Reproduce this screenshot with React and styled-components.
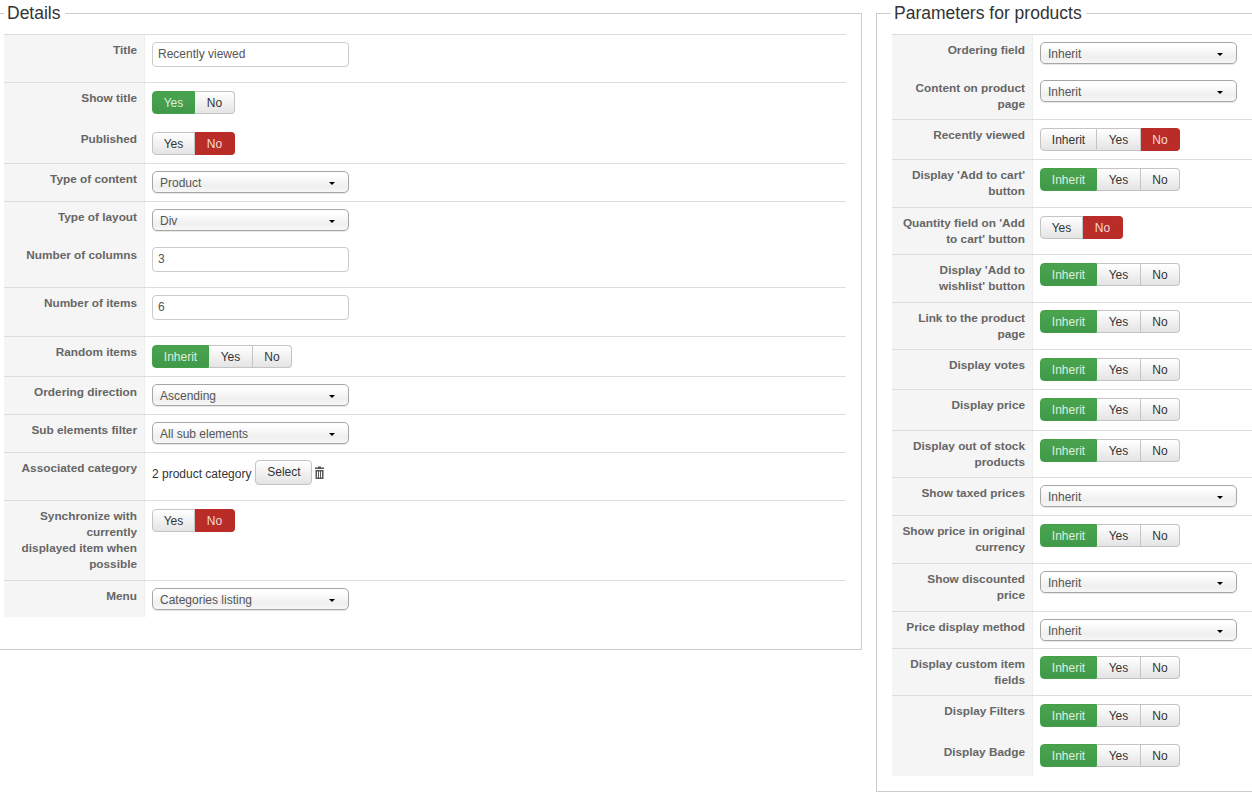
import React from "react";
import styled, { createGlobalStyle, css } from "styled-components";

const Global = createGlobalStyle`
  html, body {
    margin: 0;
    padding: 0;
    background: #fff;
    font-family: "Liberation Sans", Arial, sans-serif;
    font-size: 12px;
    color: #333;
  }
`;

const Page = styled.div`
  display: flex;
  align-items: flex-start;
  width: 1252px;
  height: 793px;
  overflow: hidden;
  gap: 14px;
`;

const Panel = styled.fieldset`
  box-sizing: border-box;
  margin: 3px 0 0;
  min-width: 0;
  border: 1px solid #ccc;
  width: ${(p) => p.$width}px;
  height: ${(p) => p.$height}px;
  padding: 0 0 0 ${(p) => p.$pad}px;
  ${(p) => p.$left && css`
    border-left: none;
    padding-right: 15px;
  `}
  ${(p) => !p.$left && css`
    border-right: none;
  `}
`;

const Legend = styled.legend`
  font-size: 17.5px;
  line-height: 21px;
  color: #333;
  padding: 0 4px 0 3px;
  margin-left: ${(p) => p.$offset}px;
`;

const Rows = styled.div`
  margin-top: 10px;
  border-bottom: 1px solid transparent;
`;

const Row = styled.div`
  box-sizing: border-box;
  display: flex;
  height: ${(p) => p.$h}px;
  ${(p) => !p.$flat && "border-top: 1px solid #ddd;"}
`;

const Label = styled.div`
  box-sizing: border-box;
  flex: 0 0 141px;
  padding: ${(p) => (p.$flat ? 8 : 7)}px 7px 0 4px;
  background: #f5f5f5;
  border-right: 1px solid #eee;
  text-align: right;
  font-size: 11.8px;
  font-weight: bold;
  line-height: 16px;
  color: #666;
`;

const Value = styled.div`
  display: flex;
  align-items: flex-start;
  padding: ${(p) => p.$top}px 0 0 7px;
`;

const TextInput = styled.input`
  box-sizing: border-box;
  width: 197px;
  height: 25px;
  padding: 0 5px 1px;
  border: 1px solid #ccc;
  border-radius: 4px;
  font: 12px "Liberation Sans", Arial, sans-serif;
  color: #555;
  background: #fff;
`;

const Select = styled.div`
  box-sizing: border-box;
  display: flex;
  align-items: center;
  justify-content: space-between;
  width: 197px;
  height: 22px;
  padding: 1px 13px 0 7px;
  border: 1px solid #a6a6a6;
  border-radius: 5px;
  background: linear-gradient(#fff 15%, #efefef 70%, #f7f7f7);
  box-shadow: 0 1px 1px rgba(0, 0, 0, 0.1);
  color: #555;
`;

const Caret = styled.span`
  width: 0;
  height: 0;
  margin-top: 2px;
  border-left: 3px solid transparent;
  border-right: 3px solid transparent;
  border-top: 3px solid #000;
`;

const Toggle = styled.div`
  display: flex;
  height: 23px;
`;

const ToggleButton = styled.div`
  box-sizing: border-box;
  display: flex;
  align-items: center;
  justify-content: center;
  width: ${(p) => p.$w}px;
  border: 1px solid #c4c4c4;
  border-left-width: ${(p) => (p.$first ? 1 : 0)}px;
  border-radius: ${(p) => (p.$first ? "4px 0 0 4px" : p.$last ? "0 4px 4px 0" : "0")};
  background: linear-gradient(#fff, #e4e4e4);
  color: #333;
  ${(p) => p.$tone === "green" && css`
    background: linear-gradient(#4aa44e, #40994a);
    border-color: #43a047;
    color: #dfeedf;
  `}
  ${(p) => p.$tone === "red" && css`
    background: #b92c28;
    border-color: #b92c28;
    color: #f4dcdc;
  `}
`;

const PlainText = styled.span`
  margin-top: 7px;
  line-height: 14px;
  color: #333;
`;

const SelectButton = styled.div`
  box-sizing: border-box;
  display: flex;
  align-items: center;
  justify-content: center;
  width: 57px;
  height: 25px;
  margin-left: 4px;
  padding-bottom: 2px;
  border: 1px solid #c4c4c4;
  border-radius: 4px;
  background: linear-gradient(#fff, #e4e4e4);
  color: #333;
`;

const TrashIcon = styled.svg`
  margin: 6px 0 0 3px;
  width: 9px;
  height: 13px;
`;

const Trash = () => (
  <TrashIcon viewBox="0 0 9 13" fill="#555">
    <path d="M3 1.5 V0.5 H6 V1.5 H9 V3 H0 V1.5 Z" />
    <path d="M0.5 4 H8.5 V13 H0.5 Z M2 5.5 V11.5 H3 V5.5 Z M4 5.5 V11.5 H5 V5.5 Z M6 5.5 V11.5 H7 V5.5 Z" fillRule="evenodd" />
  </TrashIcon>
);

const Switch = ({ value, three }) => {
  const widths = three ? [57, 44, 39] : [43, 40];
  const opts = three ? ["Inherit", "Yes", "No"] : ["Yes", "No"];
  return (
    <Toggle>
      {opts.map((o, i) => (
        <ToggleButton
          key={o}
          $w={widths[i]}
          $first={i === 0}
          $last={i === opts.length - 1}
          $tone={o === value ? (o === "No" ? "red" : "green") : undefined}
        >
          {o}
        </ToggleButton>
      ))}
    </Toggle>
  );
};

const Dropdown = ({ children }) => (
  <Select>
    {children}
    <Caret />
  </Select>
);

const Field = ({ label, h, flat, top, children }) => (
  <Row $h={h} $flat={flat}>
    <Label $flat={flat}>{label}</Label>
    <Value $top={top}>{children}</Value>
  </Row>
);

export default function App() {
  return (
    <Page>
      <Global />
      <Panel $left $width={862} $height={647} $pad={4}>
        <Legend $offset={0}>Details</Legend>
        <Rows>
          <Field label="Title" h={48} top={7}>
            <TextInput readOnly value="Recently viewed" />
          </Field>
          <Field label="Show title" h={41} top={8}>
            <Switch value="Yes" />
          </Field>
          <Field label="Published" h={40} flat top={9}>
            <Switch value="No" />
          </Field>
          <Field label="Type of content" h={38} top={7}>
            <Dropdown>Product</Dropdown>
          </Field>
          <Field label="Type of layout" h={38} top={7}>
            <Dropdown>Div</Dropdown>
          </Field>
          <Field label="Number of columns" h={48} flat top={8}>
            <TextInput readOnly value="3" />
          </Field>
          <Field label="Number of items" h={49} top={7}>
            <TextInput readOnly value="6" />
          </Field>
          <Field label="Random items" h={40} top={8}>
            <Switch three value="Inherit" />
          </Field>
          <Field label="Ordering direction" h={38} top={7}>
            <Dropdown>Ascending</Dropdown>
          </Field>
          <Field label="Sub elements filter" h={38} top={7}>
            <Dropdown>All sub elements</Dropdown>
          </Field>
          <Field label="Associated category" h={48} top={7}>
            <PlainText>2 product category</PlainText>
            <SelectButton>Select</SelectButton>
            <Trash />
          </Field>
          <Field
            label={
              <>
                Synchronize with
                <br />
                currently
                <br />
                displayed item when
                <br />
                possible
              </>
            }
            h={80}
            top={8}
          >
            <Switch value="No" />
          </Field>
          <Field label="Menu" h={37} top={7}>
            <Dropdown>Categories listing</Dropdown>
          </Field>
        </Rows>
      </Panel>
      <Panel $width={376} $height={789} $pad={15}>
        <Legend $offset={-1}>Parameters for products</Legend>
        <Rows>
          <Field label="Ordering field" h={38} top={7}>
            <Dropdown>Inherit</Dropdown>
          </Field>
          <Field label="Content on product page" h={47} flat top={8}>
            <Dropdown>Inherit</Dropdown>
          </Field>
          <Field label="Recently viewed" h={40} top={8}>
            <Switch three value="No" />
          </Field>
          <Field label="Display 'Add to cart' button" h={48} top={8}>
            <Switch three value="Inherit" />
          </Field>
          <Field
            label={
              <>
                Quantity field on 'Add
                <br />
                to cart' button
              </>
            }
            h={47}
            top={8}
          >
            <Switch value="No" />
          </Field>
          <Field label="Display 'Add to wishlist' button" h={48} top={8}>
            <Switch three value="Inherit" />
          </Field>
          <Field label="Link to the product page" h={47} top={7}>
            <Switch three value="Inherit" />
          </Field>
          <Field label="Display votes" h={40} top={8}>
            <Switch three value="Inherit" />
          </Field>
          <Field label="Display price" h={41} top={8}>
            <Switch three value="Inherit" />
          </Field>
          <Field label="Display out of stock products" h={47} top={8}>
            <Switch three value="Inherit" />
          </Field>
          <Field label="Show taxed prices" h={38} top={7}>
            <Dropdown>Inherit</Dropdown>
          </Field>
          <Field
            label={
              <>
                Show price in original
                <br />
                currency
              </>
            }
            h={48}
            top={8}
          >
            <Switch three value="Inherit" />
          </Field>
          <Field
            label={
              <>
                Show discounted
                <br />
                price
              </>
            }
            h={48}
            top={7}
          >
            <Dropdown>Inherit</Dropdown>
          </Field>
          <Field label="Price display method" h={37} top={7}>
            <Dropdown>Inherit</Dropdown>
          </Field>
          <Field label="Display custom item fields" h={47} top={7}>
            <Switch three value="Inherit" />
          </Field>
          <Field label="Display Filters" h={41} top={8}>
            <Switch three value="Inherit" />
          </Field>
          <Field label="Display Badge" h={40} flat top={8}>
            <Switch three value="Inherit" />
          </Field>
        </Rows>
      </Panel>
    </Page>
  );
}
